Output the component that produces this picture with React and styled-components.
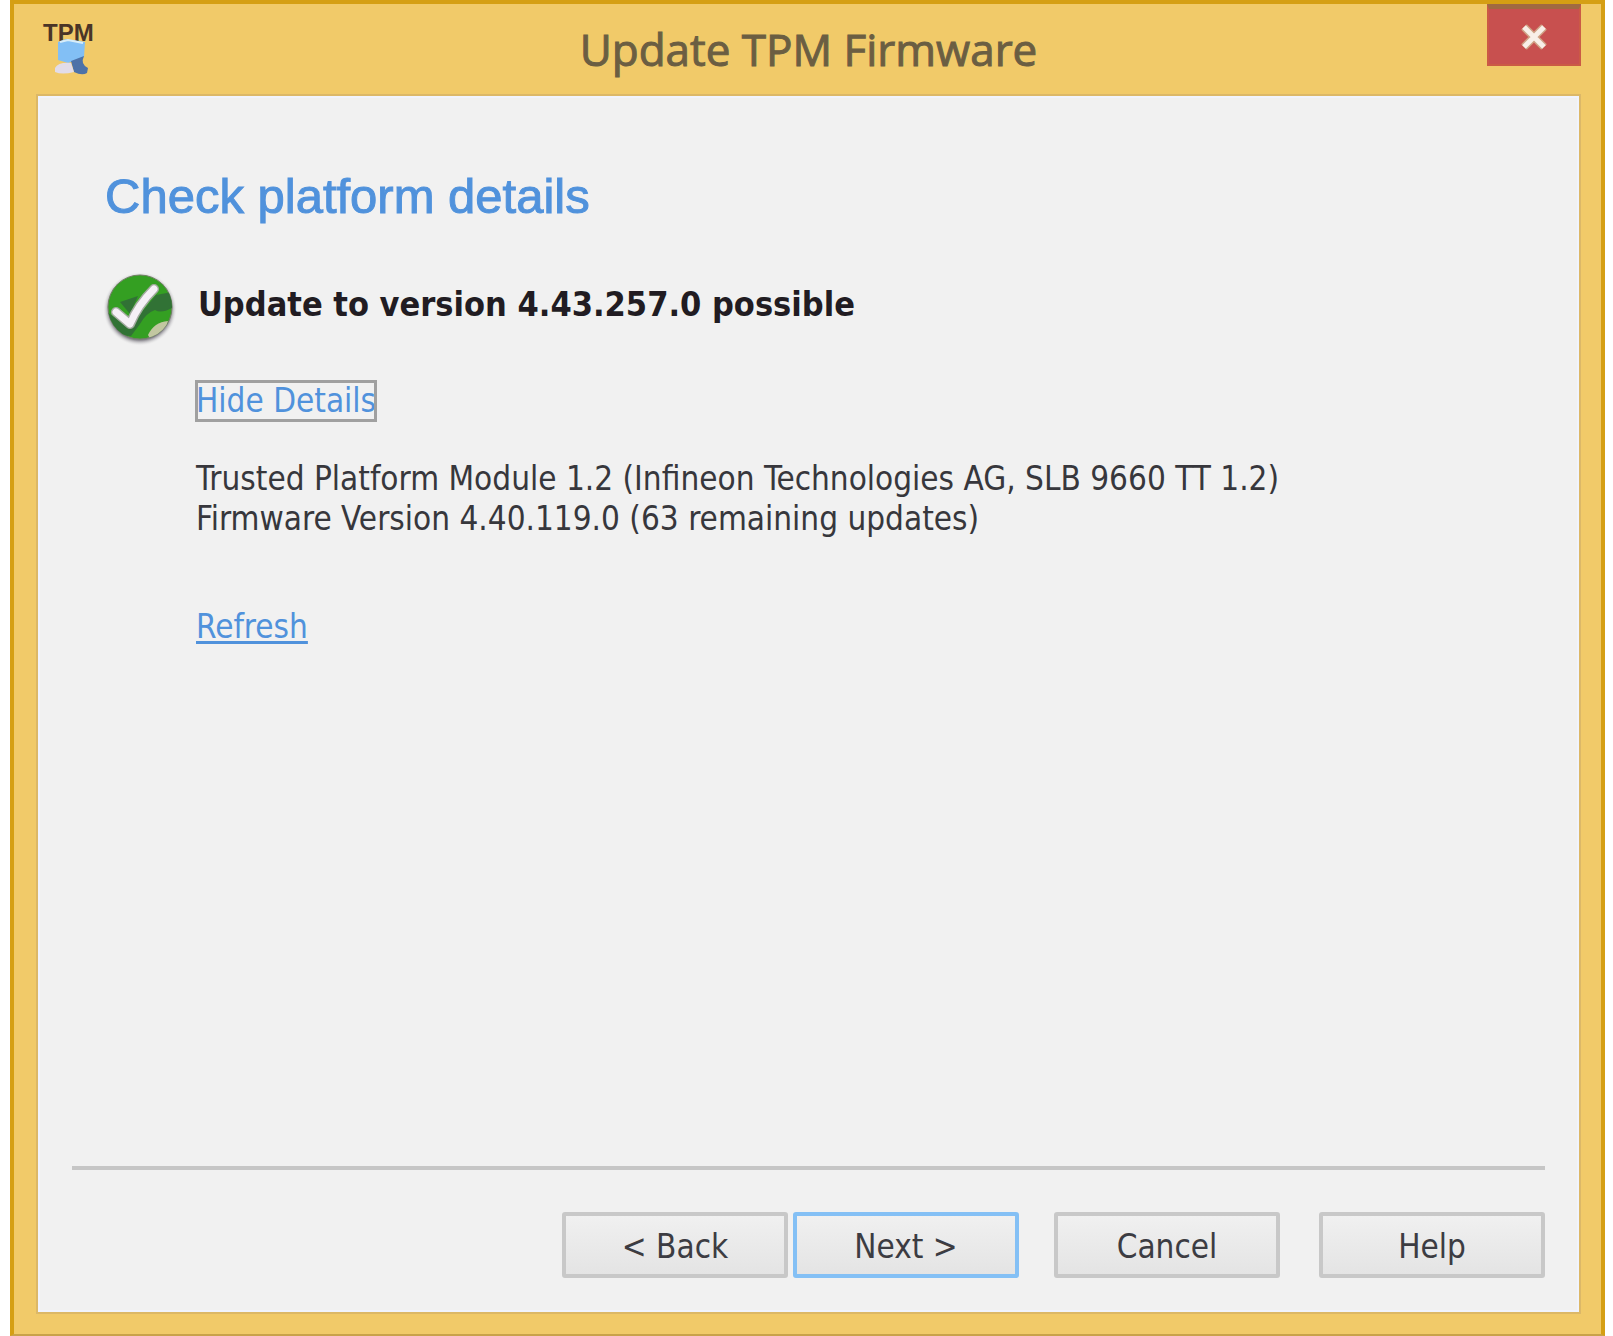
import React, { useState } from 'react';
import styled, { createGlobalStyle } from 'styled-components';

const GlobalStyle = createGlobalStyle`
    * {
        box-sizing: border-box;
    }
    body {
        margin: 0;
        background-color: white;
    }
`;

const Window = styled.div`
    display: flex;
    flex-direction: column;
    min-height: 100vh;
    margin: 0 8px 0 10px;
    padding: 0 22px 22px 24px;
    background-color: #f1ca69;
    border: 4px solid #d59f14;
    border-bottom: 2px solid #c9a24a;
    font-family: 'DejaVu Sans Condensed', 'DejaVu Sans', sans-serif;
    color: #37373c;
`;

const TitleBar = styled.header`
    display: grid;
    grid-template-columns: 96px 1fr 96px;
    align-items: start;
    height: 92px;
    padding-left: 4px;
`;

const AppIcon = styled.svg`
    width: 56px;
    height: 60px;
    margin-top: 14px;
`;

const Title = styled.h1`
    margin: 12px 4px 0 0;
    font-family: 'Open Sans', sans-serif;
    font-size: 44px;
    line-height: 66px;
    font-weight: 400;
    text-align: center;
    color: #6b5e42;
    -webkit-text-stroke: 1px #6b5e42;
`;

const CloseButton = styled.button`
    display: flex;
    align-items: center;
    justify-content: center;
    height: 62px;
    margin: 0 -2px 0 4px;
    padding: 0;
    background-color: #c8504f;
    border: 2px solid #cb5a45;
    border-top: 5px solid #a06a42;
    cursor: pointer;
`;

const Content = styled.main`
    flex: 1;
    display: flex;
    flex-direction: column;
    padding: 66px 32px 32px;
    background-color: #f1f1f1;
    border: 2px solid #f1f4fd;
    outline: 2px solid #dcb868;
`;

const Heading = styled.h2`
    margin: 0 0 38px 33px;
    font-family: 'Liberation Sans', Arial, sans-serif;
    font-size: 49px;
    line-height: 64px;
    font-weight: 400;
    color: #5092dc;
    -webkit-text-stroke: 1px #5092dc;
`;

const Status = styled.div`
    display: grid;
    grid-template-columns: 92px 1fr;
    margin-left: 34px;
`;

const StatusIcon = styled.svg`
    width: 76px;
    height: 76px;
    margin: 4px 0 0 -4px;
`;

const StatusTitle = styled.h3`
    margin: 14px 0 0;
    font-size: 34px;
    line-height: 48px;
    font-weight: 700;
    color: #211c22;
`;

const Details = styled.div`
    display: flex;
    flex-direction: column;
    align-items: flex-start;
    margin: 35px 0 0 124px;
    font-size: 33px;
    line-height: 40px;
`;

const Link = styled.a`
    color: #5092dc;
    text-decoration: ${(props) => (props.$focused ? 'none' : 'underline')};
    text-decoration-thickness: 3px;
    text-underline-offset: 3px;
    ${(props) => props.$focused && 'outline: 3px solid #a0a0a0; outline-offset: -2px;'}
`;

const Info = styled.p`
    min-height: 80px;
    margin: 38px 0 68px;
`;

const Footer = styled.footer`
    display: flex;
    justify-content: flex-end;
    margin-top: auto;
    padding-top: 42px;
    border-top: 4px solid #c6c6c6;
`;

const Button = styled.button`
    width: 226px;
    height: 66px;
    margin-left: ${(props) => props.$gap || 0}px;
    padding: 4px 0 0;
    font-family: inherit;
    font-size: 33px;
    line-height: 40px;
    color: #3c3c42;
    background: linear-gradient(#f0f0f0, #e4e4e4);
    border: 4px solid ${(props) => (props.$primary ? '#84c0f5' : '#c8c8c8')};
    border-radius: 3px;
    cursor: pointer;
`;

const TpmIcon = () => (
  <AppIcon viewBox="0 0 56 60" aria-hidden="true">
    <text x="1" y="23" fontFamily="Liberation Sans" fontSize="24" fontWeight="700" fill="#4a3527">TPM</text>
    <path d="M16 24 L24 21 L43 24 L42 39 L26 45 L16 42 Z" fill="#82bff5" />
    <path d="M18 24 L26 22 L41 25" fill="none" stroke="#d8edf8" strokeWidth="2" />
    <path d="M29 43 L42 38 Q38 46 46 50 L45 55 Q40 58 32 54 Z" fill="#4d72a8" />
    <path d="M13 50 Q16 44 29 45 L32 54 Q20 57 13 54 Z" fill="#e2dce8" />
  </AppIcon>
);

const CheckIcon = () => (
  <StatusIcon viewBox="0 0 76 76" aria-hidden="true">
    <defs>
      <radialGradient id="halo">
        <stop offset="84%" stopColor="#85838a" />
        <stop offset="100%" stopColor="#f1f1f1" stopOpacity="0" />
      </radialGradient>
      <clipPath id="disc"><circle cx="38" cy="37" r="32" /></clipPath>
    </defs>
    <circle cx="38" cy="39" r="37" fill="url(#halo)" />
    <circle cx="38" cy="37" r="32" fill="#349f22" stroke="#718064" strokeWidth="1" />
    <g clipPath="url(#disc)">
      <path d="M18 32 L36 26 L28 44 Z" fill="#317235" />
      <path d="M54 25 L70 22 V38 Q59 44 53 40 Q44 43 38 54 L29 66 L16 65 L2 40 L12 47 L29 55 Z" fill="#317235" />
      <path d="M46 65 Q52 52 66 51 L62 63 L50 72 Z" fill="#c2c7a1" />
    </g>
    <path d="M14 42 L28 54 Q36 35 52 19" fill="none" stroke="#a3aaa0" strokeWidth="10" strokeLinecap="round" strokeLinejoin="round" />
    <path d="M14 42 L28 54 Q36 35 52 19" fill="none" stroke="#f5f0f6" strokeWidth="7" strokeLinecap="round" strokeLinejoin="round" />
  </StatusIcon>
);

const App = () => {
  const [showDetails, setShowDetails] = useState(true);

  const toggleDetails = (event) => {
    event.preventDefault();
    setShowDetails(!showDetails);
  };

  return (
    <>
      <GlobalStyle />
      <Window>
        <TitleBar>
          <TpmIcon />
          <Title>Update TPM Firmware</Title>
          <CloseButton type="button" aria-label="Close">
            <svg width="30" height="30" viewBox="0 0 30 30" aria-hidden="true">
              <path d="M5 5 L25 25 M25 5 L5 25" stroke="#cfa184" strokeWidth="8" />
              <path d="M5 5 L25 25 M25 5 L5 25" stroke="#f8efe8" strokeWidth="5" />
            </svg>
          </CloseButton>
        </TitleBar>

        <Content>
          <Heading>Check platform details</Heading>

          <Status>
            <CheckIcon />
            <StatusTitle>Update to version 4.43.257.0 possible</StatusTitle>
          </Status>

          <Details>
            <Link href="#details" $focused onClick={toggleDetails}>
              {showDetails ? 'Hide Details' : 'Show Details'}
            </Link>
            <Info>
              {showDetails && (
                <>
                  Trusted Platform Module 1.2 (Infineon Technologies AG, SLB 9660 TT 1.2)<br />
                  Firmware Version 4.40.119.0 (63 remaining updates)
                </>
              )}
            </Info>
            <Link href="#refresh">Refresh</Link>
          </Details>

          <Footer>
            <Button type="button">&lt; Back</Button>
            <Button type="button" $primary $gap={5}>Next &gt;</Button>
            <Button type="button" $gap={35}>Cancel</Button>
            <Button type="button" $gap={39}>Help</Button>
          </Footer>
        </Content>
      </Window>
    </>
  );
};

export default App;
